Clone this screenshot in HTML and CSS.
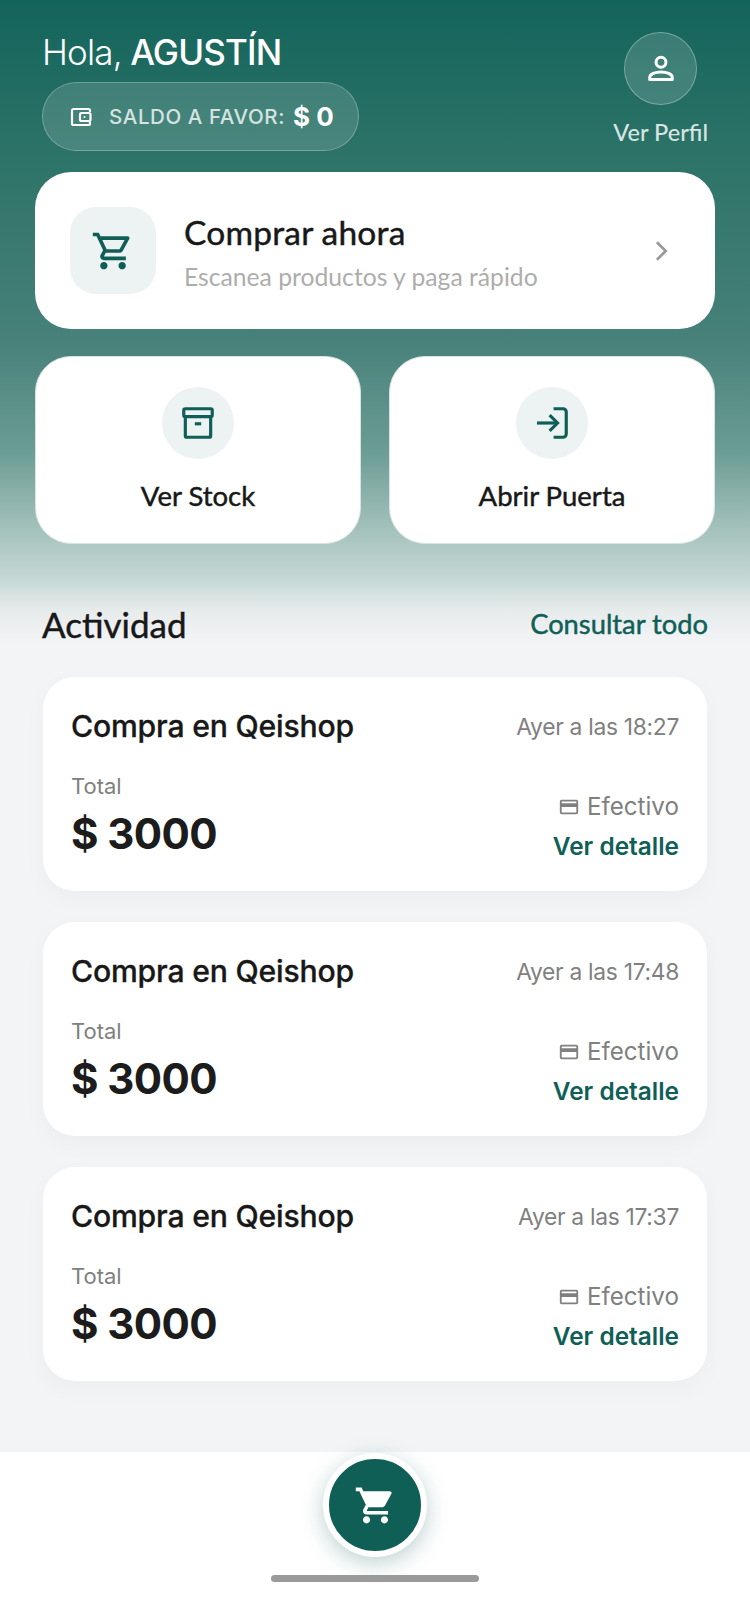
FILE: index.html
```html
<!DOCTYPE html>
<html lang="es">
<head>
<meta charset="UTF-8">
<meta name="viewport" content="width=device-width">
<title>Inicio</title>
<link rel="stylesheet" href="styles.css">
</head>
<body>
<div class="page">

	<!-- header -->
	<header class="top">
		<div class="top-left">
			<h1 class="hello"><span class="hello-light">Hola,</span> AGUSTÍN</h1>
			<div class="balance">
				<svg class="balance-icon" viewBox="0 0 24 24" fill="none" stroke="currentColor" stroke-width="2.2">
					<path d="M21 7V5.500A1.500 1.500 0 0 0 19.500 4h-15A1.500 1.500 0 0 0 3 5.500v13A1.500 1.500 0 0 0 4.500 20h15a1.500 1.500 0 0 0 1.500-1.500V17"/>
					<rect x="11" y="8" width="10.500" height="8" rx="1.500"/>
					<circle cx="15.500" cy="12" r="1" fill="currentColor" stroke="none"/>
				</svg>
				<span class="balance-label">SALDO A FAVOR:</span>
				<strong class="balance-value">$ 0</strong>
			</div>
		</div>
		<a class="profile" href="#">
			<span class="profile-icon">
				<svg viewBox="0 0 24 24" width="36" height="36" fill="none" stroke="currentColor" stroke-width="2">
					<circle cx="12" cy="7.500" r="3.300"/>
					<path d="M4.500 19v-1.300c0-2.300 3.800-3.700 7.500-3.700s7.500 1.400 7.500 3.700V19z" stroke-linejoin="round"/>
				</svg>
			</span>
			<span class="profile-text">Ver Perfil</span>
		</a>
	</header>

	<!-- actions -->
	<section class="actions">
		<a class="buy-card" href="#">
			<span class="buy-icon">
				<svg viewBox="0 0 24 24" width="44" height="44" fill="currentColor">
					<path d="M15.550 13c.750 0 1.410-.410 1.750-1.030l3.580-6.490c.370-.660-.110-1.480-.870-1.480H5.210l-.940-2H1v2h2l3.600 7.590-1.350 2.440C4.520 15.370 5.480 17 7 17h12v-2H7l1.100-2h7.450zM6.160 6h12.150l-2.760 5H8.530L6.160 6zM7 18c-1.100 0-1.990.900-1.990 2S5.900 22 7 22s2-.900 2-2-.900-2-2-2zm10 0c-1.100 0-1.990.900-1.990 2s.890 2 1.990 2 2-.900 2-2-.900-2-2-2z"/>
				</svg>
			</span>
			<span class="buy-text">
				<span class="buy-title">Comprar ahora</span>
				<span class="buy-sub">Escanea productos y paga rápido</span>
			</span>
			<svg class="buy-arrow" viewBox="0 0 24 24" width="28" height="28" fill="none" stroke="currentColor" stroke-width="2.400">
				<path d="M8.500 4.500 16 12l-7.500 7.500"/>
			</svg>
		</a>
		<div class="quick">
			<a class="quick-card" href="#">
				<span class="quick-icon">
					<svg viewBox="0 0 24 24" width="38" height="38" fill="none" stroke="currentColor" stroke-width="2">
						<rect x="3" y="3" width="18" height="5" rx="1"/>
						<path d="M4 8v12a1 1 0 0 0 1 1h14a1 1 0 0 0 1-1V8"/>
						<path d="M10 12.500h4"/>
					</svg>
				</span>
				<span class="quick-text">Ver Stock</span>
			</a>
			<a class="quick-card" href="#">
				<span class="quick-icon">
					<svg viewBox="0 0 24 24" width="38" height="38" fill="none" stroke="currentColor" stroke-width="2">
						<path d="M13 3h6a2 2 0 0 1 2 2v14a2 2 0 0 1-2 2h-6"/>
						<path d="M2.500 12H15"/>
						<path d="m10.500 7 5 5-5 5"/>
					</svg>
				</span>
				<span class="quick-text">Abrir Puerta</span>
			</a>
		</div>
	</section>

	<!-- activity -->
	<section class="activity">
		<div class="activity-head">
			<h2>Actividad</h2>
			<a href="#">Consultar todo</a>
		</div>

		<article class="row">
			<div class="row-top">
				<span class="row-title">Compra en Qeishop</span>
				<span class="row-time">Ayer a las 18:27</span>
			</div>
			<div class="row-bottom">
				<div>
					<div class="row-label">Total</div>
					<div class="row-amount">$ 3000</div>
				</div>
				<div class="row-side">
					<div class="row-method">
						<svg viewBox="0 0 24 24" width="22" height="22" fill="currentColor"><path d="M20 4H4a2 2 0 0 0-2 2v12a2 2 0 0 0 2 2h16a2 2 0 0 0 2-2V6a2 2 0 0 0-2-2zm0 14H4v-6h16v6zm0-10H4V6h16v2z"/></svg>
						Efectivo
					</div>
					<a class="row-link" href="#">Ver detalle</a>
				</div>
			</div>
		</article>

		<article class="row">
			<div class="row-top">
				<span class="row-title">Compra en Qeishop</span>
				<span class="row-time">Ayer a las 17:48</span>
			</div>
			<div class="row-bottom">
				<div>
					<div class="row-label">Total</div>
					<div class="row-amount">$ 3000</div>
				</div>
				<div class="row-side">
					<div class="row-method">
						<svg viewBox="0 0 24 24" width="22" height="22" fill="currentColor"><path d="M20 4H4a2 2 0 0 0-2 2v12a2 2 0 0 0 2 2h16a2 2 0 0 0 2-2V6a2 2 0 0 0-2-2zm0 14H4v-6h16v6zm0-10H4V6h16v2z"/></svg>
						Efectivo
					</div>
					<a class="row-link" href="#">Ver detalle</a>
				</div>
			</div>
		</article>

		<article class="row">
			<div class="row-top">
				<span class="row-title">Compra en Qeishop</span>
				<span class="row-time">Ayer a las 17:37</span>
			</div>
			<div class="row-bottom">
				<div>
					<div class="row-label">Total</div>
					<div class="row-amount">$ 3000</div>
				</div>
				<div class="row-side">
					<div class="row-method">
						<svg viewBox="0 0 24 24" width="22" height="22" fill="currentColor"><path d="M20 4H4a2 2 0 0 0-2 2v12a2 2 0 0 0 2 2h16a2 2 0 0 0 2-2V6a2 2 0 0 0-2-2zm0 14H4v-6h16v6zm0-10H4V6h16v2z"/></svg>
						Efectivo
					</div>
					<a class="row-link" href="#">Ver detalle</a>
				</div>
			</div>
		</article>
	</section>

	<!-- bottom bar -->
	<nav class="bottom">
		<a class="fab" href="#">
			<svg viewBox="0 0 24 24" width="43" height="43" fill="currentColor">
				<path d="M7 18c-1.100 0-1.990.900-1.990 2S5.900 22 7 22s2-.900 2-2-.900-2-2-2zM1 2v2h2l3.600 7.590-1.350 2.450c-.160.280-.250.610-.250.960 0 1.100.900 2 2 2h12v-2H7.420c-.140 0-.250-.110-.250-.250l.030-.120.900-1.630h7.450c.750 0 1.410-.410 1.750-1.030l3.580-6.490c.080-.140.120-.310.120-.480 0-.550-.450-1-1-1H5.210l-.940-2H1zm16 16c-1.100 0-1.990.900-1.990 2s.890 2 1.990 2 2-.900 2-2-.900-2-2-2z"/>
			</svg>
		</a>
		<span class="home-bar"></span>
	</nav>

</div>
</body>
</html>
```

FILE: styles.css
```css
/* -------------------------------------
		GLOBAL
------------------------------------- */
* {
	margin: 0;
	padding: 0;
	box-sizing: border-box;
}

body {
	font-family: "Inter", "Liberation Sans", sans-serif;
	color: #181818;
	background: #f3f4f6;
}

a {
	color: inherit;
	text-decoration: none;
}

.page {
	width: 750px;
	height: 1600px;
	display: flex;
	flex-direction: column;
	overflow: hidden;
	background: linear-gradient(180deg, #13645b 0, #2f7469 170px, #47817a 340px, #6a9c93 450px, #a8c4bf 535px, #c6d8d5 580px, #e8eced 612px, #f3f4f6 645px);
}

/* -------------------------------------
		HEADER
------------------------------------- */
.top {
	display: flex;
	justify-content: space-between;
	padding: 30px 42px 0;
	height: 172px;
}

.hello {
	font-size: 35px;
	line-height: 44px;
	font-weight: 500;
	color: #fff;
	letter-spacing: -0.85px;
}

.hello-light {
	font-weight: 300;
}

.balance {
	display: flex;
	align-items: center;
	width: 317px;
	height: 69px;
	margin-top: 8px;
	padding-left: 26px;
	border: 1px solid rgba(255, 255, 255, 0.25);
	border-radius: 35px;
	background: rgba(255, 255, 255, 0.14);
	color: #fff;
}

.balance-icon {
	width: 24px;
	height: 24px;
}

.balance-label {
	margin-left: 16px;
	font-size: 20.5px;
	font-weight: 500;
	letter-spacing: 0.6px;
	color: #d5e3e0;
}

.balance-value {
	margin-left: 8px;
	font-size: 26px;
	font-weight: 700;
}

.profile {
	display: flex;
	flex-direction: column;
	align-items: center;
	margin-top: 2px;
}

.profile-icon {
	display: flex;
	align-items: center;
	justify-content: center;
	width: 73px;
	height: 73px;
	border: 1px solid rgba(255, 255, 255, 0.3);
	border-radius: 50%;
	background: rgba(255, 255, 255, 0.15);
	color: #fff;
}

.profile-text {
	margin-top: 13px;
	font-family: "Lato", sans-serif;
	font-size: 23.5px;
	font-weight: 500;
	color: #d7e5e2;
}

/* -------------------------------------
		ACTIONS
------------------------------------- */
.actions {
	padding: 0 35px;
}

.buy-card {
	display: flex;
	align-items: center;
	height: 157px;
	padding: 0 35px;
	border-radius: 36px;
	background: #fff;
}

.buy-icon {
	display: flex;
	align-items: center;
	justify-content: center;
	width: 86px;
	height: 87px;
	border-radius: 26px;
	background: #edf2f2;
	color: #0f5f57;
}

.buy-text {
	display: flex;
	flex-direction: column;
	flex: 1;
	margin-left: 28px;
	padding-top: 2px;
	font-family: "Lato", sans-serif;
}

/* Lato has no medium weight installed, a thin stroke gets close */
.buy-title,
.quick-text,
.activity-head h2,
.activity-head a {
	font-weight: 400;
	-webkit-text-stroke: 0.45px currentColor;
}

.buy-title {
	font-size: 33.5px;
	line-height: 40px;
	letter-spacing: 0.2px;
	color: #181818;
}

.buy-sub {
	margin-top: 10px;
	font-size: 24.7px;
	line-height: 30px;
	color: #adadad;
}

.buy-arrow {
	margin-right: 5px;
	color: #9a9a9a;
}

.quick {
	display: flex;
	gap: 28px;
	margin-top: 27px;
}

.quick-card {
	flex: 1;
	display: flex;
	flex-direction: column;
	align-items: center;
	height: 188px;
	padding-top: 30px;
	border: 1px solid #d9e3e1;
	border-radius: 36px;
	background: #fff;
}

.quick-icon {
	display: flex;
	align-items: center;
	justify-content: center;
	width: 72px;
	height: 72px;
	border-radius: 50%;
	background: #edf2f2;
	color: #0f5f57;
}

.quick-text {
	margin-top: 19px;
	font-family: "Lato", sans-serif;
	font-size: 27.5px;
	line-height: 36px;
	color: #181818;
}

/* -------------------------------------
		ACTIVITY
------------------------------------- */
.activity {
	flex: 1;
	padding: 0 43px;
}

.activity-head {
	display: flex;
	justify-content: space-between;
	align-items: center;
	height: 133px;
	padding-top: 26px;
	font-family: "Lato", sans-serif;
}

.activity-head h2 {
	font-size: 35px;
	color: #181818;
	margin-left: -1px;
}

.activity-head a {
	font-size: 27.3px;
	color: #0f5f57;
	margin-right: -1px;
}

.row {
	height: 214px;
	margin-bottom: 31px;
	padding: 29px 28px 0;
	border-radius: 32px;
	background: #fff;
	box-shadow: 0 8px 24px rgba(20, 30, 40, 0.03);
}

.row-top {
	display: flex;
	justify-content: space-between;
	align-items: center;
	height: 40px;
}

.row-title {
	font-size: 30.2px;
	font-weight: 500;
	letter-spacing: -0.2px;
	-webkit-text-stroke: 0.3px currentColor;
	color: #181818;
}

.row-time {
	font-size: 22.8px;
	color: #808080;
	letter-spacing: -0.3px;
}

.row-bottom {
	display: flex;
	justify-content: space-between;
	margin-top: 26px;
}

.row-label {
	font-size: 22px;
	line-height: 28px;
	color: #808080;
}

.row-amount {
	margin-top: 7px;
	font-size: 42px;
	line-height: 54px;
	font-weight: 700;
	letter-spacing: -0.6px;
	color: #1c1c1c;
}

.row-side {
	display: flex;
	flex-direction: column;
	align-items: flex-end;
	padding-top: 20px;
}

.row-method {
	display: flex;
	align-items: center;
	gap: 7px;
	font-size: 24.2px;
	line-height: 30px;
	color: #808080;
}

.row-link {
	margin-top: 9px;
	font-size: 24.4px;
	font-weight: 600;
	line-height: 30px;
	color: #0f5f57;
}

/* -------------------------------------
		BOTTOM BAR
------------------------------------- */
.bottom {
	display: flex;
	flex-direction: column;
	align-items: center;
	height: 148px;
	padding-top: 1px;
	background: #fff;
}

.fab {
	display: flex;
	align-items: center;
	justify-content: center;
	width: 104px;
	height: 104px;
	border: 6px solid #fff;
	border-radius: 50%;
	background: #0f5f57;
	color: #fff;
	box-shadow: 0 6px 22px rgba(15, 95, 87, 0.28);
}

.home-bar {
	width: 208px;
	height: 7px;
	margin-top: 18px;
	border-radius: 4px;
	background: #9a9a9a;
}
```
